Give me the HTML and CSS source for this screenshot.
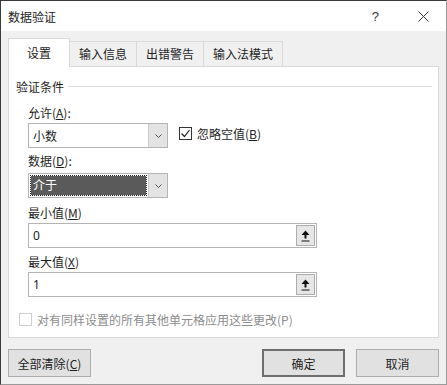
FILE: index.html
```html
<!DOCTYPE html>
<html lang="zh-CN">
  <head>
    <meta charset="UTF-8" />
    <title>数据验证</title>
    <link rel="stylesheet" href="styles.css">
  </head>
  <body>
    <div class="dialog">
      <div class="titlebar">
        <span class="title">数据验证</span>
        <span class="help">?</span>
        <svg class="close" width="11" height="11" viewBox="0 0 11 11">
          <path d="M0.5 0.5 L10.5 10.5 M10.5 0.5 L0.5 10.5" stroke="#333" stroke-width="1" fill="none" />
        </svg>
      </div>

      <div class="tabs">
        <div class="tab active">设置</div>
        <div class="tab">输入信息</div>
        <div class="tab">出错警告</div>
        <div class="tab">输入法模式</div>
      </div>

      <div class="panel">
        <div class="group-title">
          <span>验证条件</span>
          <span class="group-line"></span>
        </div>

        <div class="fields">
          <div class="field-label">允许(<u>A</u>):</div>
          <div class="row">
            <div class="select">
              <span class="select-value">小数</span>
              <span class="select-btn">
                <svg width="7" height="4" viewBox="0 0 7 4"><path d="M0.5 0.5 L3.5 3.5 L6.5 0.5" stroke="#555" fill="none" /></svg>
              </span>
            </div>
            <label class="check">
              <span class="box checked">
                <svg width="11" height="11" viewBox="0 0 11 11"><path d="M1.5 5.5 L4.5 8.5 L9.5 2" stroke="#222" stroke-width="1.2" fill="none" /></svg>
              </span>
              忽略空值(<u>B</u>)
            </label>
          </div>

          <div class="field-label after-select">数据(<u>D</u>):</div>
          <div class="select">
            <span class="select-value selected"><span class="sel-text">介于</span></span>
            <span class="select-btn">
              <svg width="7" height="4" viewBox="0 0 7 4"><path d="M0.5 0.5 L3.5 3.5 L6.5 0.5" stroke="#555" fill="none" /></svg>
            </span>
          </div>

          <div class="field-label after-data">最小值(<u>M</u>)</div>
          <div class="input">
            <span class="input-value">0</span>
            <span class="spin">
              <svg width="9" height="12" viewBox="0 0 9 12"><path d="M4.5 0.5 L8.5 5 L5.5 5 L5.5 8.5 L3.5 8.5 L3.5 5 L0.5 5 Z" fill="#111" /><path d="M0.5 11 L8.5 11" stroke="#111" /></svg>
            </span>
          </div>

          <div class="field-label after-input">最大值(<u>X</u>)</div>
          <div class="input">
            <span class="input-value">1</span>
            <span class="spin">
              <svg width="9" height="12" viewBox="0 0 9 12"><path d="M4.5 0.5 L8.5 5 L5.5 5 L5.5 8.5 L3.5 8.5 L3.5 5 L0.5 5 Z" fill="#111" /><path d="M0.5 11 L8.5 11" stroke="#111" /></svg>
            </span>
          </div>
        </div>

        <label class="check disabled">
          <span class="box"></span>
          对有同样设置的所有其他单元格应用这些更改(P)
        </label>
      </div>

      <div class="buttons">
        <button class="btn">全部清除(<u>C</u>)</button>
        <span class="spacer"></span>
        <button class="btn default">确定</button>
        <button class="btn">取消</button>
      </div>
    </div>
  </body>
</html>
```

FILE: styles.css
```css
/* Data validation dialog */
body {
  margin: 0;
  padding: 0;
  font-family: "Noto Sans CJK SC", "Liberation Sans", sans-serif;
  font-size: 12px;
  color: #1e1e1e;
}

.dialog {
  width: 447px;
  height: 385px;
  box-sizing: border-box;
  background-color: #f0f0f0;
  border: 1px solid #9a9a9a;
  border-left-color: #3a3a3a;
  border-top-color: #3a3a3a;
}

.titlebar {
  height: 30px;
  background-color: #fff;
  display: flex;
  align-items: center;
  padding-left: 7px;
}

.title {
  font-size: 12px;
  flex: 1;
  color: #222;
}

.help {
  font-family: "Liberation Sans", sans-serif;
  font-size: 13px;
  color: #333;
  margin-right: 39px;
}

.close {
  margin-right: 17px;
}

.tabs {
  display: flex;
  align-items: flex-end;
  margin-top: 7px;
  padding-left: 7px;
  height: 28px;
  position: relative;
  z-index: 1;
}

.tab {
  height: 24px;
  line-height: 23px;
  padding: 0 9px;
  border: 1px solid #d9d9d9;
  border-bottom: none;
  margin-left: -1px;
  background-color: #f0f0f0;
}

.tab.active {
  height: 28px;
  line-height: 27px;
  padding: 0 18px;
  margin-left: 0;
  margin-bottom: -1px;
  background-color: #fff;
}

.panel {
  margin: 0 7px;
  height: 272px;
  box-sizing: border-box;
  background-color: #fff;
  border: 1px solid #d9d9d9;
  padding: 0 6px 0 7px;
}

.group-title {
  display: flex;
  align-items: center;
  height: 16px;
  margin-top: 11px;
}

.group-line {
  flex: 1;
  height: 1px;
  background-color: #dcdcdc;
  margin-left: 4px;
}

.fields {
  padding-left: 12px;
}

.field-label {
  height: 16px;
  line-height: 16px;
  margin-top: 11px;
}

.field-label.after-select {
  margin-top: 5px;
}

.field-label.after-data {
  margin-top: 7px;
}

.field-label.after-input {
  margin-top: 6px;
}

.row {
  display: flex;
  align-items: flex-start;
  margin-top: 2px;
}

.select {
  width: 140px;
  height: 25px;
  box-sizing: border-box;
  border: 1px solid #b4b4b4;
  display: flex;
  margin-top: 4px;
  background-color: #fff;
}

.row .select {
  margin-top: 0;
}

.select-value {
  flex: 1;
  line-height: 23px;
  padding-left: 4px;
}

.select-value.selected {
  padding: 2px;
  display: flex;
}

.sel-text {
  flex: 1;
  background-color: #5a5a5a;
  color: #fff;
  line-height: 17px;
  padding-left: 2px;
  outline: 1px dotted #222;
}

.select-btn {
  width: 18px;
  background-color: #e3e3e3;
  border-left: 1px solid #c8c8c8;
  display: flex;
  align-items: center;
  justify-content: center;
}

.check {
  display: flex;
  align-items: center;
  height: 16px;
  margin-left: 11px;
  margin-top: 2px;
}

.box {
  width: 11px;
  height: 11px;
  border: 1px solid #333;
  margin-right: 5px;
  display: flex;
  align-items: center;
  justify-content: center;
  background-color: #fff;
}

.input {
  width: 289px;
  height: 25px;
  box-sizing: border-box;
  border: 1px solid #b4b4b4;
  display: flex;
  align-items: center;
  margin-top: 2px;
}

.input-value {
  flex: 1;
  padding-left: 4px;
  font-family: "Noto Sans", sans-serif;
}

.spin {
  width: 19px;
  height: 21px;
  margin-right: 1px;
  box-sizing: border-box;
  background-color: #e6e6e6;
  border: 1px solid #adadad;
  display: flex;
  align-items: center;
  justify-content: center;
}

.check.disabled {
  color: #8c8c8c;
  margin-left: 3px;
  margin-top: 14px;
}

.check.disabled .box {
  border-color: #cfcfcf;
}

.buttons {
  display: flex;
  gap: 11px;
  padding: 11px 7px 0 7px;
}

.spacer {
  flex: 1;
}

.btn {
  width: 83px;
  height: 28px;
  font-family: "Noto Sans CJK SC", "Liberation Sans", sans-serif;
  font-size: 12px;
  color: #1e1e1e;
  background-color: #e1e1e1;
  border: 1px solid #adadad;
  padding: 0;
}

.btn.default {
  border: 2px solid #6e6e6e;
}

u {
  text-decoration: underline;
  text-underline-offset: 1px;
}
```
